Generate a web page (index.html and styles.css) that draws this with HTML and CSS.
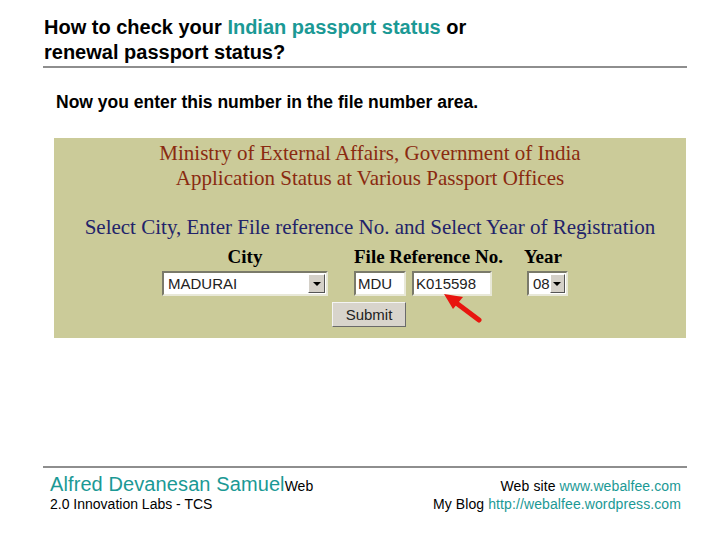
FILE: index.html
```html
<!DOCTYPE html>
<html lang="en">
<head>
    <meta charset="UTF-8">
    <title>How to check your Indian passport status</title>
    <link rel="stylesheet" href="styles.css">
</head>
<body>
    <div class="slide">
        <h1 class="title">How to check your <span class="accent">Indian passport status</span> or<br>renewal passport status?</h1>

        <p class="note">Now you enter this number in the file number area.</p>

        <div class="shot">
            <div class="shot-head">
                Ministry of External Affairs, Government of India<br>
                Application Status at Various Passport Offices
            </div>
            <div class="shot-sub">Select City, Enter File reference No. and Select Year of Registration</div>

            <div class="form-labels">
                <span class="lbl-city">City</span>
                <span class="lbl-file">File Reference No.</span>
                <span class="lbl-year">Year</span>
            </div>
            <div class="form-fields">
                <div class="fake-select city-select">
                    <span class="value">MADURAI</span>
                    <span class="drop"><i></i></span>
                </div>
                <div class="fake-input prefix">MDU</div>
                <div class="fake-input fileno">K015598</div>
                <div class="fake-select year-select">
                    <span class="value">08</span>
                    <span class="drop"><i></i></span>
                </div>
            </div>
            <div class="form-submit">
                <div class="fake-button">Submit</div>
            </div>

            <!-- red arrow pointing at the file number -->
            <svg class="arrow" width="50" height="40" viewBox="0 0 50 40">
                <line x1="38" y1="31" x2="14" y2="13" stroke="#e8150f" stroke-width="5" stroke-linecap="round"/>
                <polygon points="3,5 22,8 12,20" fill="#e8150f"/>
            </svg>
        </div>

        <div class="footer">
            <div class="footer-left">
                <span class="author">Alfred Devanesan Samuel</span>Web<br>
                2.0 Innovation Labs - TCS
            </div>
            <div class="footer-right">
                Web site <span class="accent">www.webalfee.com</span><br>
                My Blog <span class="accent">http://webalfee.wordpress.com</span>
            </div>
        </div>
    </div>
</body>
</html>
```

FILE: styles.css
```css
body {
    margin: 0;
    background: #fff;
    font-family: "Liberation Sans", Arial, sans-serif;
    color: #000;
}

.slide {
    width: 728px;
    height: 546px;
    padding: 0 41px 0 43px;
    box-sizing: border-box;
}

.accent {
    color: #1b9995;
}

.title {
    margin: 0;
    padding: 15px 0 1px 1px;
    font-size: 20px;
    line-height: 25px;
    font-weight: bold;
    border-bottom: 2px solid #8e8e8e;
}

.note {
    margin: 24px 0 0 13px;
    font-size: 17.5px;
    line-height: 20px;
    font-weight: bold;
}

/* the screenshot of the passport page */
.shot {
    position: relative;
    margin: 26px 0 0 11px;
    width: 632px;
    height: 200px;
    background: #cbcb99;
    font-family: "Liberation Serif", "Times New Roman", serif;
}

.shot-head {
    padding-top: 3px;
    text-align: center;
    color: #8a2a10;
    font-size: 21px;
    line-height: 25px;
}

.shot-sub {
    margin-top: 24px;
    text-align: center;
    color: #22236a;
    font-size: 21px;
    line-height: 24px;
}

.form-labels {
    display: flex;
    margin-top: 8px;
    padding-left: 108px;
    font-weight: bold;
    font-size: 19px;
    line-height: 20px;
}

.lbl-city {
    width: 166px;
    text-align: center;
}

.lbl-file {
    margin-left: 26px;
    width: 170px;
}

.form-fields {
    display: flex;
    margin-top: 4px;
    padding-left: 108px;
    font-family: "Liberation Sans", Arial, sans-serif;
    font-size: 15px;
}

.fake-input,
.fake-select {
    display: flex;
    align-items: center;
    height: 25px;
    box-sizing: border-box;
    background: #fff;
    border: 2px solid;
    border-color: #7a7a6a #e8e8d8 #e8e8d8 #7a7a6a;
    color: #222;
}

.fake-input {
    padding-left: 2px;
}

.city-select {
    width: 166px;
}

.prefix {
    margin-left: 26px;
    width: 52px;
}

.fileno {
    margin-left: 6px;
    width: 80px;
}

.year-select {
    margin-left: 35px;
    width: 41px;
}

.fake-select .value {
    flex: 1;
    padding-left: 4px;
}

.drop {
    width: 15px;
    height: 17px;
    margin-right: 1px;
    background: #d4d0c8;
    border: 1px solid;
    border-color: #fff #555 #555 #fff;
    display: flex;
    align-items: center;
    justify-content: center;
}

.drop i {
    width: 0;
    height: 0;
    border-left: 4px solid transparent;
    border-right: 4px solid transparent;
    border-top: 4px solid #000;
}

.form-submit {
    margin-top: 6px;
    padding-left: 278px;
}

.fake-button {
    width: 74px;
    height: 25px;
    box-sizing: border-box;
    background: #d8d4cc;
    border: 1px solid;
    border-color: #f4f4f4 #6a6a6a #6a6a6a #f4f4f4;
    font-family: "Liberation Sans", Arial, sans-serif;
    font-size: 15px;
    line-height: 23px;
    text-align: center;
    color: #222;
}

.arrow {
    position: absolute;
    left: 387px;
    top: 151px;
}

.footer {
    display: flex;
    justify-content: space-between;
    margin-top: 128px;
    padding: 9px 6px 0 7px;
    border-top: 2px solid #8e8e8e;
    font-size: 14px;
    line-height: 18px;
}

.author {
    color: #1b9995;
    font-size: 20px;
    line-height: 14px;
    letter-spacing: 0.1px;
}

.footer-right {
    text-align: right;
    letter-spacing: 0.1px;
}
```
